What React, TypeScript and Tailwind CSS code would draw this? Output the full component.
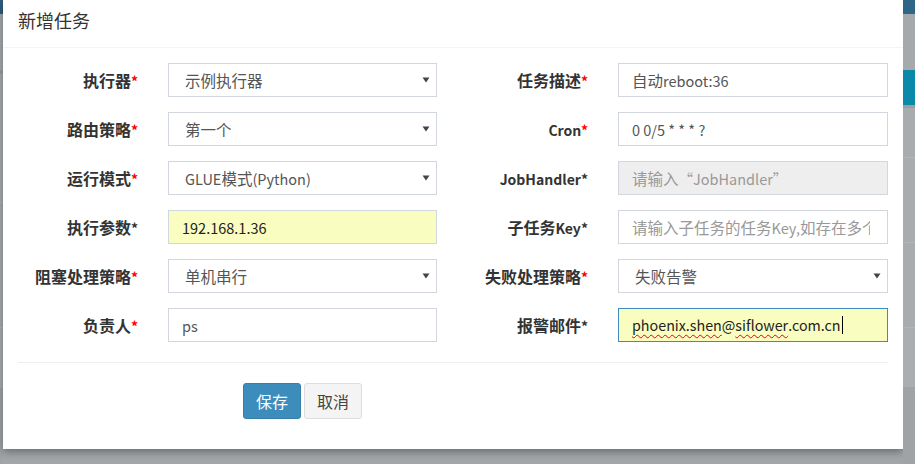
import React from "react";

const font = { fontFamily: '"Noto Sans CJK SC", "Liberation Sans", sans-serif' };

function Mixed({ text, cjk, latin }: { text: string; cjk: string; latin: string }) {
  const parts = text.split(/([\u3000-\u303f\u4e00-\u9fff\uff00-\uffef]+)/).filter((p) => p.length > 0);
  return (
    <>
      {parts.map((p, i) => (
        <span key={i} className={/[\u4e00-\u9fff\uff00-\uffef]/.test(p) ? cjk : latin}>
          {p}
        </span>
      ))}
    </>
  );
}

function Label({ text, red = true }: { text: string; red?: boolean }) {
  return (
    <div className="w-[120px] h-[34px] shrink-0 flex items-center justify-end font-bold text-[#333] whitespace-nowrap">
      <span className="leading-[20px]">
        <Mixed text={text} cjk="text-[16px]" latin="text-[14px]" />
        <span className={`text-[14px] ${red ? "text-[#ff0000]" : "text-[#333]"}`}>*</span>
      </span>
    </div>
  );
}

function Caret() {
  return (
    <svg width="8" height="6" viewBox="0 0 8 6" className="shrink-0">
      <path d="M0.5 0.5 L7.5 0.5 L4 5.5 Z" fill="#444" />
    </svg>
  );
}

function Select({ value, w }: { value: string; w: string }) {
  return (
    <div className={`${w} h-[34px] shrink-0 border border-[#d2d6de] bg-white flex items-center pl-[16px] pr-[6px] text-[#555]`}>
      <span className="flex-1 whitespace-nowrap leading-[20px]">
        <Mixed text={value} cjk="text-[15.5px]" latin="text-[14.5px]" />
      </span>
      <Caret />
    </div>
  );
}

function Input({
  value,
  w,
  className = "",
  placeholder,
  pr = "pr-[12px]",
}: {
  value?: React.ReactNode;
  w: string;
  className?: string;
  placeholder?: string;
  pr?: string;
}) {
  return (
    <div
      className={`${w} h-[34px] shrink-0 border flex items-center pl-[13px] ${pr} whitespace-nowrap ${
        className || "border-[#d2d6de] bg-white text-[#555]"
      }`}
    >
      {value !== undefined ? (
        <div className="flex-1 flex items-center leading-[20px]">
          {typeof value === "string" ? (
            <span>
              <Mixed text={value} cjk="text-[15.5px]" latin="text-[14.5px]" />
            </span>
          ) : (
            value
          )}
        </div>
      ) : (
        <div className="overflow-hidden flex-1 flex items-center leading-[20px]">
          <span className="text-[#999]">
            <Mixed text={placeholder || ""} cjk="text-[15.5px]" latin="text-[14.5px]" />
          </span>
        </div>
      )}
    </div>
  );
}

export default function App() {
  const L = "w-[269px]";
  const R = "w-[270px]";
  return (
    <div style={font} className="w-[915px] h-[464px] flex bg-[#a2a6a9] overflow-hidden">
      {/* left strip of page behind */}
      <div className="w-[3px] h-full flex flex-col shrink-0">
        <div className="h-[14px] bg-[#2d5f7e]" />
        <div className="h-[56px] bg-[#a5a9ac]" />
        <div className="h-[4px] bg-[#9a9ea3]" />
        <div className="h-[128px] bg-[#a7abae]" />
        <div className="h-px bg-[#b2b5b8]" />
        <div className="h-[124px] bg-[#a7abae]" />
        <div className="h-px bg-[#b2b5b8]" />
        <div className="h-[60px] bg-[#a9acaf]" />
        <div className="flex-1 bg-[#9fa3a6]" />
      </div>

      {/* modal */}
      <div className="w-[900px] h-[449px] bg-white shrink-0 flex flex-col shadow-[0_3px_8px_rgba(0,0,0,0.35)]">
        <div className="h-[48px] border-b border-[#f4f4f4] pl-[15px] flex items-center shrink-0">
          <span className="text-[18px] text-[#333] leading-none mb-[7px]">新增任务</span>
        </div>

        <div className="px-[15px] pt-[15px] flex flex-col gap-[15px]">
          <div className="flex items-center h-[34px]">
            <Label text="执行器" />
            <div className="w-[30px]" />
            <Select value="示例执行器" w={L} />
            <div className="w-[31px]" />
            <Label text="任务描述" />
            <div className="w-[30px]" />
            <Input value="自动reboot:36" w={R} />
          </div>

          <div className="flex items-center h-[34px]">
            <Label text="路由策略" />
            <div className="w-[30px]" />
            <Select value="第一个" w={L} />
            <div className="w-[31px]" />
            <Label text="Cron" />
            <div className="w-[30px]" />
            <Input value="0 0/5 * * * ?" w={R} />
          </div>

          <div className="flex items-center h-[34px]">
            <Label text="运行模式" />
            <div className="w-[30px]" />
            <Select value="GLUE模式(Python)" w={L} />
            <div className="w-[31px]" />
            <Label text="JobHandler" red={false} />
            <div className="w-[30px]" />
            <Input
              w={R}
              placeholder="请输入“JobHandler”"
              className="border-[#d2d6de] bg-[#eeeeee]"
            />
          </div>

          <div className="flex items-center h-[34px]">
            <Label text="执行参数" red={false} />
            <div className="w-[30px]" />
            <Input
              value="192.168.1.36"
              w={L}
              className="border-[#d2d6de] bg-[#fafdc0] text-[#222]"
            />
            <div className="w-[31px]" />
            <Label text="子任务Key" red={false} />
            <div className="w-[30px]" />
            <Input w={R} pr="pr-[17px]" placeholder="请输入子任务的任务Key,如存在多个" />
          </div>

          <div className="flex items-center h-[34px]">
            <Label text="阻塞处理策略" />
            <div className="w-[30px]" />
            <Select value="单机串行" w={L} />
            <div className="w-[31px]" />
            <Label text="失败处理策略" />
            <div className="w-[30px]" />
            <Select value="失败告警" w={R} />
          </div>

          <div className="flex items-center h-[34px]">
            <Label text="负责人" />
            <div className="w-[30px]" />
            <Input value="ps" w={L} />
            <div className="w-[31px]" />
            <Label text="报警邮件" red={false} />
            <div className="w-[30px]" />
            <Input
              w={R}
              className="border-[#3c8dbc] bg-[#fafdc0] text-[#222]"
              value={
                <span className="flex items-center text-[14.3px]">
                  <span className="underline decoration-wavy decoration-[#e00] decoration-1 underline-offset-[3px]">
                    phoenix.shen
                  </span>
                  <span>@</span>
                  <span className="underline decoration-wavy decoration-[#e00] decoration-1 underline-offset-[3px]">
                    siflower
                  </span>
                  <span>.com.cn</span>
                  <span className="inline-block w-px h-[18px] bg-black ml-px" />
                </span>
              }
            />
          </div>
        </div>

        <div className="mx-[15px] mt-[20px] border-t border-[#eeeeee]" />

        <div className="pl-[240px] pt-[20px] flex gap-[3px]">
          <button className="w-[58px] h-[36px] rounded-[3px] bg-[#3c8dbc] border border-[#367fa9] text-white text-[16px]">
            保存
          </button>
          <button className="w-[58px] h-[36px] rounded-[3px] bg-[#f4f4f4] border border-[#dddddd] text-[#444] text-[16px]">
            取消
          </button>
        </div>
      </div>

      {/* right strip of page behind */}
      <div className="flex-1 h-full flex flex-col">
        <div className="h-[14px] bg-[#2f6587]" />
        <div className="h-[56px] bg-[#a5a9ac]" />
        <div className="h-[35px] bg-[#0b89a8]" />
        <div className="h-[3px] bg-[#9a9ea3]" />
        <div className="h-[49px] bg-[#a8acaf]" />
        <div className="h-px bg-[#b3b6b9]" />
        <div className="h-[84px] bg-[#a8acaf]" />
        <div className="h-px bg-[#b3b6b9]" />
        <div className="h-[84px] bg-[#a8acaf]" />
        <div className="h-px bg-[#b3b6b9]" />
        <div className="h-[59px] bg-[#aaaeb1]" />
        <div className="flex-1 bg-[#9fa3a6]" />
      </div>
    </div>
  );
}
